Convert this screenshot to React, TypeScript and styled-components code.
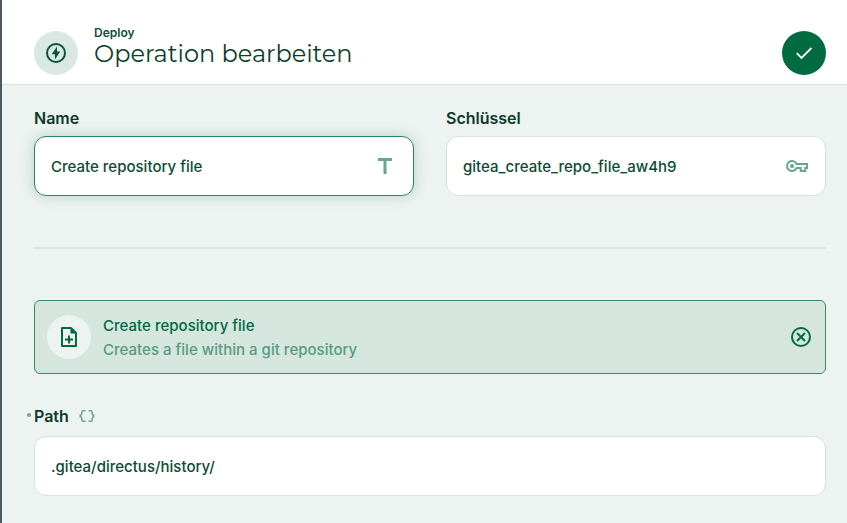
import React from 'react';
import styled, { createGlobalStyle } from 'styled-components';

const Global = createGlobalStyle`
  *, *::before, *::after { box-sizing: border-box; }
  body { margin: 0; background: #edf3f1; font-family: Inter, "Liberation Sans", sans-serif; }
  svg { display: block; flex: none; }
`;

const Drawer = styled.div`
  height: 523px;
  border-left: 2px solid #4f5a60;
  background: #edf3f1;
  overflow: hidden;
`;

const Header = styled.header`
  height: 85px;
  padding: 31px 21px 0 32px;
  display: flex;
  align-items: flex-start;
  background: #fff;
  border-bottom: 1px solid #d6e6e1;
`;

const Round = styled.div<{ $bg: string; $fg: string }>`
  width: 44px;
  height: 44px;
  padding: 0;
  border: 0;
  flex: none;
  border-radius: 50%;
  display: grid;
  place-items: center;
  background: ${(p) => p.$bg};
  color: ${(p) => p.$fg};
`;

const Heading = styled.div`
  flex: 1;
  margin: -5px 0 0 16px;
`;

const Kicker = styled.div`
  font-size: 12px;
  line-height: 14px;
  font-weight: 600;
  color: #0b5138;
`;

const Title = styled.h1`
  margin: 0;
  font-family: Montserrat, Inter, sans-serif;
  font-weight: 400;
  font-size: 24px;
  line-height: 28px;
  color: #0c3f2b;
  white-space: nowrap;
`;

const Content = styled.main`
  padding: 23px 21px 0 32px;
`;

const Columns = styled.div`
  display: grid;
  grid-template-columns: 1fr 1fr;
  gap: 32px;
`;

const Label = styled.div<{ $gap?: number }>`
  height: 20px;
  margin-bottom: ${(p) => p.$gap ?? 8}px;
  display: flex;
  align-items: center;
  gap: 9px;
  font-size: 16px;
  font-weight: 600;
  color: #0b3b28;
  position: relative;
`;

const RequiredDot = styled.span`
  position: absolute;
  left: -7px;
  top: 7px;
  width: 4px;
  height: 4px;
  border-radius: 50%;
  background: #6aa88f;
`;

const Input = styled.div<{ $active?: boolean }>`
  height: 60px;
  padding: 0 16px;
  display: flex;
  align-items: center;
  justify-content: space-between;
  border: 1px solid ${(p) => (p.$active ? '#2b8260' : '#d3e4de')};
  border-radius: 12px;
  background: #fff;
  box-shadow: ${(p) => (p.$active ? '0 0 14px rgba(0, 105, 64, 0.24)' : 'none')};
  font-size: 15px;
  font-weight: 500;
  letter-spacing: 0.01px;
  color: #0b4c33;
`;

const Muted = styled.span`
  color: #66a78d;
`;

const Divider = styled.hr`
  height: 2px;
  margin: 51px 0;
  border: 0;
  background: #d6e7e1;
`;

const Notice = styled.div`
  height: 74px;
  margin-bottom: 32px;
  padding: 0 12px;
  display: flex;
  align-items: center;
  border: 1px solid #37896a;
  border-radius: 6px;
  background: #d5e6df;
  color: #006a41;
`;

const NoticeText = styled.div`
  flex: 1;
  margin-left: 12px;
  padding-top: 2px;
  font-size: 15px;
  line-height: 24px;
  font-weight: 500;
  letter-spacing: 0.02px;
`;

const NoticeSub = styled.div`
  color: #589b80;
`;

const Icon = ({ children }: { children: React.ReactNode }) => (
  <svg width="24" height="24" viewBox="0 0 24 24" fill="none" stroke="currentColor" strokeWidth="2">
    {children}
  </svg>
);

const BoltIcon = () => (
  <Icon>
    <circle cx="12" cy="12" r="9" />
    <path d="M13 5.5v5h3.3L11 18.3v-5H7.7z" fill="currentColor" stroke="none" />
  </Icon>
);

const CheckIcon = () => (
  <Icon>
    <path d="m4.8 12.2 4.7 4.7L19.4 7" strokeWidth="1.8" />
  </Icon>
);

const TitleIcon = () => (
  <Icon>
    <path d="M5 4v3h5.5v13h3V7H19V4z" fill="currentColor" stroke="none" />
  </Icon>
);

const KeyIcon = () => (
  <Icon>
    <path d="M11.6 10H22v4h-1.7v3h-4.6v-3h-4.1A5 5 0 1 1 11.6 10z" />
    <circle cx="7" cy="12" r="2" fill="currentColor" stroke="none" />
  </Icon>
);

const NoteAddIcon = () => (
  <Icon>
    <path d="M14 3H5v18h14V8z" strokeLinejoin="round" />
    <path d="M13.5 3v5.5H19z" fill="currentColor" stroke="none" />
    <path d="M12 10.5v8M8 14.5h8" />
  </Icon>
);

const CancelIcon = () => (
  <Icon>
    <circle cx="12" cy="12" r="9" />
    <path d="m8 8 8 8m0-8-8 8" />
  </Icon>
);

const BracesIcon = () => (
  <svg width="18" height="18" viewBox="0 0 24 24" fill="currentColor">
    <path d="M4 7v2c0 .55-.45 1-1 1H2v4h1c.55 0 1 .45 1 1v2c0 1.65 1.35 3 3 3h3v-2H7c-.55 0-1-.45-1-1v-2c0-1.3-.84-2.42-2-2.83v-.34C5.16 11.42 6 10.3 6 9V7c0-.55.45-1 1-1h3V4H7C5.35 4 4 5.35 4 7zM21 10c-.55 0-1-.45-1-1V7c0-1.65-1.35-3-3-3h-3v2h3c.55 0 1 .45 1 1v2c0 1.3.84 2.42 2 2.83v.34c-1.16.41-2 1.52-2 2.83v2c0 .55-.45 1-1 1h-3v2h3c1.65 0 3-1.35 3-3v-2c0-.55.45-1 1-1h1v-4h-1z" />
  </svg>
);

export default function App() {
  return (
    <Drawer>
      <Global />
      <Header>
        <Round $bg="#dae8e3" $fg="#075437"><BoltIcon /></Round>
        <Heading>
          <Kicker>Deploy</Kicker>
          <Title>Operation bearbeiten</Title>
        </Heading>
        <Round as="button" $bg="#006a41" $fg="#fff"><CheckIcon /></Round>
      </Header>
      <Content>
        <Columns>
          <div>
            <Label>Name</Label>
            <Input $active>Create repository file<Muted><TitleIcon /></Muted></Input>
          </div>
          <div>
            <Label>Schlüssel</Label>
            <Input>gitea_create_repo_file_aw4h9<Muted><KeyIcon /></Muted></Input>
          </div>
        </Columns>
        <Divider />
        <Notice>
          <Round $bg="#edf3f1" $fg="#006a41"><NoteAddIcon /></Round>
          <NoticeText>
            Create repository file
            <NoticeSub>Creates a file within a git repository</NoticeSub>
          </NoticeText>
          <CancelIcon />
        </Notice>
        <Label $gap={10}><RequiredDot />Path<Muted><BracesIcon /></Muted></Label>
        <Input>.gitea/directus/history/</Input>
      </Content>
    </Drawer>
  );
}
